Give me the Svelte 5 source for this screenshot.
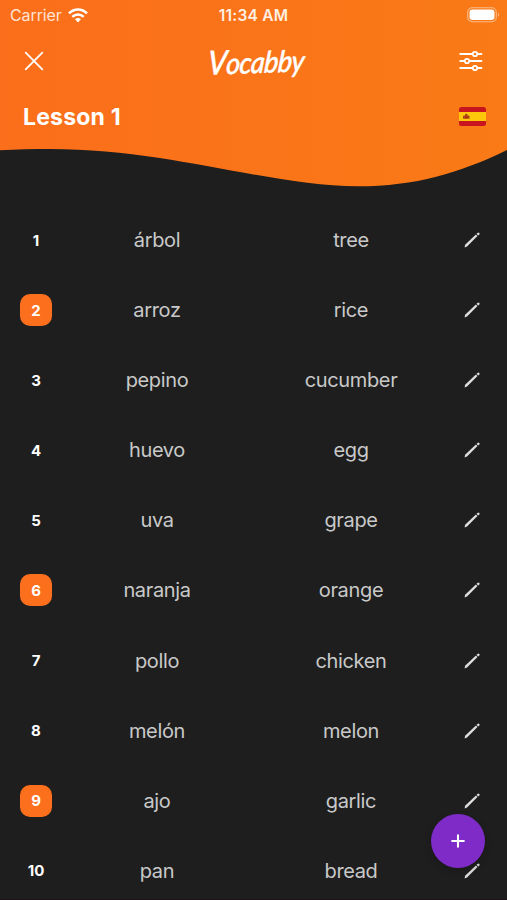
<script>
  const words = [
    ['árbol', 'tree'],
    ['arroz', 'rice', true],
    ['pepino', 'cucumber'],
    ['huevo', 'egg'],
    ['uva', 'grape'],
    ['naranja', 'orange', true],
    ['pollo', 'chicken'],
    ['melón', 'melon'],
    ['ajo', 'garlic', true],
    ['pan', 'bread'],
  ];
</script>

<main class="screen">
  <header>
    <svg class="wave" viewBox="0 0 507 190" width="507" height="190" aria-hidden="true">
      <defs>
        <linearGradient id="heat" x1="0" y1="0" x2="1" y2="0">
          <stop offset="0" stop-color="#fb6e1b" />
          <stop offset="1" stop-color="#f97a16" />
        </linearGradient>
      </defs>
      <path fill="url(#heat)" d="M0 0H507V150C460 173 415 186.3 358 186.3C270 186.3 170 149 50 149C33 149 16 149.3 0 150.2Z" />
    </svg>
    <div class="status">
      <div class="carrier">
        <span>Carrier</span>
        <svg width="20" height="15" viewBox="0 0 20 15" fill="none" stroke="#fff" stroke-width="2.6">
          <path d="M1 5.4C6 .2 14 .2 19 5.4" />
          <path d="M4.3 8.9C7.5 5.7 12.5 5.7 15.7 8.9" />
          <path d="M7 11.2Q10 8.7 13 11.2L10 14.4Z" fill="#fff" stroke="none" />
        </svg>
      </div>
      <time>11:34 AM</time>
      <svg class="battery" width="33" height="16" viewBox="0 0 33 16">
        <rect x=".7" y=".7" width="28.6" height="14" rx="4.5" fill="none" stroke="#fff" stroke-opacity=".5" stroke-width="1.1" />
        <rect x="2.5" y="2.5" width="25" height="10.4" rx="3" fill="#fff" />
        <path d="M31 5.5Q33 7.7 31 10Z" fill="#fff" opacity=".55" />
      </svg>
    </div>
    <div class="bar">
      <svg width="20" height="20" viewBox="0 0 20 20" stroke="#fff" stroke-width="1.8" stroke-linecap="round">
        <path d="M1.7 1.7L18.3 18.3M18.3 1.7L1.7 18.3" />
      </svg>
      <h1>Vocabby</h1>
      <svg width="24" height="22" viewBox="0 0 24 22" fill="none" stroke="#fff" stroke-width="1.8" stroke-linecap="round">
        <path d="M1.2 4H13.3M18.7 4H22.5M1.2 11H5.3M10.7 11H22.5M1.2 18H13.3M18.7 18H22.5" />
        <circle cx="16" cy="4" r="2.2" />
        <circle cx="8" cy="11" r="2.2" />
        <circle cx="16" cy="18" r="2.2" />
      </svg>
    </div>
    <div class="lesson">
      <h2>Lesson 1</h2>
      <svg width="27" height="20" viewBox="0 0 27 20">
        <defs><clipPath id="flag"><rect width="27" height="19" rx="2.5" /></clipPath></defs>
        <g clip-path="url(#flag)">
          <rect width="27" height="19" fill="#c8141f" />
          <rect y="5" width="27" height="9" fill="#fdc80c" />
          <path d="M4 11.7V9.2L5 8.2L6 8.8V7.4L7.3 6.4L8.6 7.4V8.8L9.6 8.2L10.6 9.2V11.7Z" fill="#a84c15" />
          <path d="M6.2 9.5H8.4V11.2H6.2Z" fill="#c8141f" />
        </g>
      </svg>
    </div>
  </header>

  <ol>
    {#each words as [term, meaning, marked], i}
      <li>
        <span class="num" class:marked>{i + 1}</span>
        <span class="word">{term}</span>
        <span class="word">{meaning}</span>
        <svg width="16" height="16" viewBox="0 0 16 16">
          <path d="M.6 15.4L1.1 12.8L11.9 2.4L13.5 4L3 14.5Z" fill="#dededc" />
          <path d="M12.5 1.8L13.5 .9Q14.6 .1 15.4 1Q16 1.9 15.2 2.7L14.2 3.5Z" fill="#dededc" />
        </svg>
      </li>
    {/each}
  </ol>

  <button class="add" aria-label="Add word">
    <svg width="14" height="14" viewBox="0 0 14 14" stroke="#fff" stroke-width="2.1" stroke-linecap="round">
      <path d="M7 1.2V12.8M1.2 7H12.8" />
    </svg>
  </button>
</main>

<style>
  :global(body) { background: #1e1e1e; }
  .screen {
    position: relative;
    box-sizing: border-box;
    width: 507px;
    height: 900px;
    overflow: hidden;
    border-bottom: 1px solid #1d1019;
    background: #1e1e1e;
    color: #fff;
    font-family: Inter, "Liberation Sans", sans-serif;
  }
  svg { display: block; flex: none; }
  header { position: relative; height: 205px; }
  .wave { position: absolute; inset: 0; z-index: 0; }
  .status, .bar, .lesson { position: relative; display: flex; align-items: center; justify-content: space-between; }
  .status { height: 30px; padding: 0 7px 0 7px; display: grid; grid-template-columns: 1fr auto 1fr; font-size: 16px; }
  .carrier { display: flex; align-items: center; gap: 6px; padding-left: 3px; color: #ffe3d2; letter-spacing: -.1px; }
  time { font-weight: 600; font-size: 15.5px; letter-spacing: .25px; color: #fff0e4; }
  .battery { justify-self: end; }
  .bar { height: 62px; padding: 0 24px; }
  h1 {
    margin: 0 0 0 9px;
    font: italic 500 27px/40px Lato, sans-serif;
    letter-spacing: -.6px;
    -webkit-text-stroke: .4px #fff;
    transform: rotate(-2deg) skewX(-7deg) scaleY(1.1);
  }
  h1::first-letter { font-size: 30px; }
  .lesson { height: 49px; padding: 0 21px 0 23px; }
  h2 { margin: 0; font-size: 23px; font-weight: 700; letter-spacing: .2px; }
  ol { margin: 0; padding: 0; list-style: none; }
  li {
    display: grid;
    grid-template-columns: 32px 202px 194px 1fr;
    align-items: center;
    height: 70.08px;
    padding: 0 27px 0 20px;
  }
  li svg { justify-self: end; }
  .num {
    display: grid;
    place-items: center;
    height: 32px;
    border-radius: 10px;
    font-size: 15px;
    font-weight: 700;
  }
  .marked { background: #fc6f1c; }
  .word { text-align: center; font-size: 20px; letter-spacing: -.35px; color: #c9c9c9; }
  .word:nth-child(2) { padding-left: 8px; }
  .add {
    position: absolute;
    left: 430.5px;
    top: 813.5px;
    display: grid;
    place-items: center;
    width: 54px;
    height: 54px;
    padding: 0;
    border: 0;
    border-radius: 50%;
    background: #7e2bc8;
    box-shadow: 0 3px 8px #0003;
  }
</style>
